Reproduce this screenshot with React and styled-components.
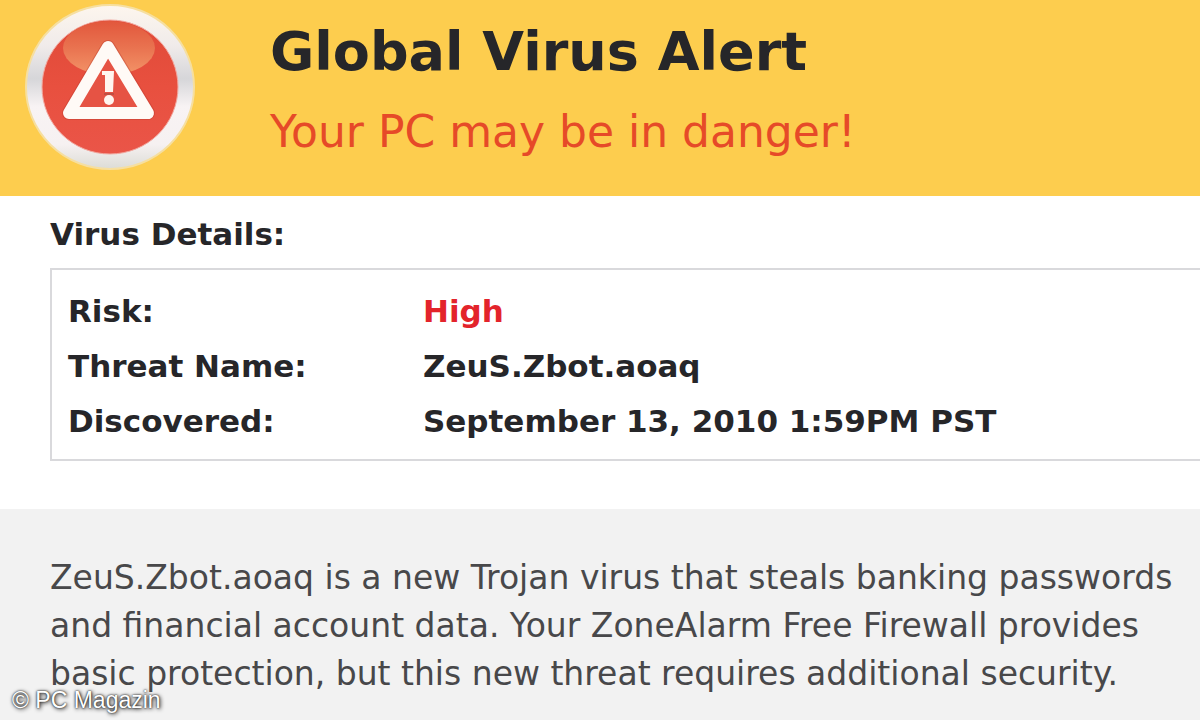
import styled, { createGlobalStyle } from "styled-components";

const details = [
    { label: "Risk:", value: "High", danger: true },
    { label: "Threat Name:", value: "ZeuS.Zbot.aoaq" },
    { label: "Discovered:", value: "September 13, 2010 1:59PM PST" },
];

export default function App(){
    return(
        <>
        <GlobalStyle/>
        <Page>
            <Header>
                <AlertIcon/>
                <div>
                    <Title>Global Virus Alert</Title>
                    <Subtitle>Your PC may be in danger!</Subtitle>
                </div>
            </Header>
            <Details>
                <DetailsTitle id="details">Virus Details:</DetailsTitle>
                <Box>
                    <Table aria-labelledby="details">
                        <tbody>
                            {details.map((item) => (
                                <tr key={item.label}>
                                    <Label scope="row">{item.label}</Label>
                                    <Value $danger={item.danger}>{item.value}</Value>
                                </tr>
                            ))}
                        </tbody>
                    </Table>
                </Box>
            </Details>
            <Description>
                <p>
                    ZeuS.Zbot.aoaq is a new Trojan virus that steals banking passwords
                    <br/>
                    and financial account data. Your ZoneAlarm Free Firewall provides
                    <br/>
                    basic protection, but this new threat requires additional security.
                </p>
                <Credit>© PC Magazin</Credit>
            </Description>
        </Page>
        </>
    )
}

function AlertIcon(){
    return(
        <Icon viewBox="0 0 172 172" aria-hidden="true">
            <defs>
                <linearGradient id="ring" x1="0" y1="0" x2="0" y2="1">
                    <stop offset="0" stopColor="#fdf6ee"/>
                    <stop offset="0.25" stopColor="#f0ebea"/>
                    <stop offset="0.45" stopColor="#d6d6d9"/>
                    <stop offset="0.62" stopColor="#f8f3f4"/>
                    <stop offset="0.85" stopColor="#f6f1f1"/>
                    <stop offset="1" stopColor="#dcdcd6"/>
                </linearGradient>
                <linearGradient id="disc" x1="0" y1="0" x2="0" y2="1">
                    <stop offset="0" stopColor="#e04a38"/>
                    <stop offset="0.5" stopColor="#e8503f"/>
                    <stop offset="1" stopColor="#ea5548"/>
                </linearGradient>
                <linearGradient id="shine" x1="0" y1="0" x2="0" y2="1">
                    <stop offset="0" stopColor="#e2573c"/>
                    <stop offset="0.5" stopColor="#e97350"/>
                    <stop offset="1" stopColor="#f39468"/>
                </linearGradient>
            </defs>
            <ellipse cx="86" cy="87" rx="84" ry="82" fill="url(#ring)" stroke="#f6dfa0" strokeWidth="2"/>
            <ellipse cx="86" cy="87" rx="68" ry="67" fill="url(#disc)" stroke="#f2a9a0" strokeWidth="1"/>
            <ellipse cx="85" cy="48" rx="46" ry="27" fill="url(#shine)"/>
            <path d="M84 47 L124 113 H45 Z" fill="#e65344" stroke="#b8392e" strokeOpacity="0.4" strokeWidth="14" strokeLinejoin="round"/>
            <path d="M84 47 L124 113 H45 Z" fill="#e65344" stroke="#fffaf6" strokeWidth="12" strokeLinejoin="round"/>
            <path d="M78 71 H90 L89 92 H81 L81 75 H78 Z" fill="#fff5ef"/>
            <path d="M80 94 H90" stroke="#9a4a40" strokeWidth="1"/>
            <circle cx="85" cy="100" r="5" fill="#fff5ef"/>
        </Icon>
    )
}

const GlobalStyle = createGlobalStyle`
body{
    margin:0;
    background-color:#f2f2f2;
    color:#262629;
    font-family:Verdana, "DejaVu Sans", sans-serif;
}
h1, h2, p{
    margin:0;
}
`

const Page = styled.main`
overflow:hidden;
`

const Header = styled.header`
box-sizing:border-box;
display:flex;
gap:74px;
min-height:196px;
padding:0 24px;
background-color:#fdcd4e;
`

const Icon = styled.svg`
flex:none;
width:172px;
height:172px;
`

const Title = styled.h1`
margin-top:20px;
font-size:54px;
line-height:64px;
font-weight:700;
`

const Subtitle = styled.p`
margin-top:20px;
font-size:44px;
line-height:56px;
color:#e64a28;
`

const Details = styled.section`
padding:22px 0 48px 50px;
background-color:#fff;
`

const DetailsTitle = styled.h2`
font-size:31px;
line-height:32px;
`

const Box = styled.div`
margin-top:18px;
padding:14px 16px 10px 16px;
border:2px solid #d9d9dc;
border-right:none;
`

const Table = styled.table`
width:100%;
border-collapse:collapse;
font-size:31px;
line-height:55px;
text-align:left;
`

const Label = styled.th`
width:355px;
padding:0;
`

const Value = styled.td`
padding:0;
font-weight:700;
color:${(props) => props.$danger ? "#e3242b" : "inherit"};
`

const Description = styled.section`
position:relative;
padding:45px 24px 22px 50px;
font-size:33px;
line-height:48px;
color:#48484a;
`

const Credit = styled.small`
position:absolute;
left:12px;
bottom:6px;
font-family:"Liberation Sans", Arial, sans-serif;
font-size:23px;
line-height:28px;
color:#fff;
text-shadow:0 0 2px #000, 1px 1px 4px #000;
`
